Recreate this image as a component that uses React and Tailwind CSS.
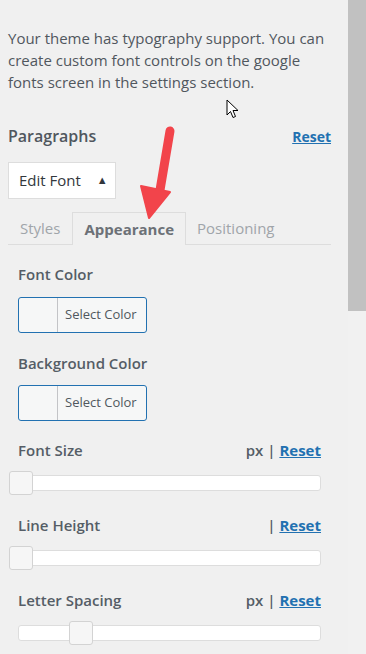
import React from "react";

const font = { fontFamily: '"Open Sans", "Noto Sans", sans-serif' };

// slider row: label, unit, reset, track with handle
function SliderControl({ label, unit, handleLeft }) {
  return (
    <div className="pl-[10px] pr-[10px]">
      <div className="flex items-center justify-between h-[22px]">
        <span className="text-[15px] font-semibold text-[#555d66]">{label}</span>
        <span className="text-[15px] font-semibold text-[#555d66]">
          {unit ? unit + " " : ""}|{" "}
          <a href="#" className="font-bold text-[#2271b1] underline">Reset</a>
        </span>
      </div>
      <div className="relative mt-[14px] h-[16px] bg-white border border-[#dddddd] rounded-[3px]">
        <div
          className="absolute top-[-5px] w-[24px] h-[24px] bg-[#f6f6f6] border border-[#d3d3d3] rounded-[3px]"
          style={{ left: handleLeft }}
        />
      </div>
    </div>
  );
}

function ColorButton() {
  return (
    <button className="flex h-[36px] w-[129px] items-stretch rounded-[3px] border border-[#2271b1] bg-[#f6f7f7] overflow-hidden">
      <span className="w-[39px] border-r border-[#c3c4c7]" />
      <span className="flex items-center pl-[7px] text-[13px] text-[#50575e]">Select Color</span>
    </button>
  );
}

export default function App() {
  return (
    <div className="relative flex h-[654px] w-[366px] overflow-hidden bg-[#f0f0f0]" style={font}>
      {/* 主內容 */}
      <div className="flex-1 pl-[8px] pr-[17px]">
        <p className="mt-[27px] text-[15px] leading-[22px] text-[#50575e]">
          Your theme has typography support. You can create custom font controls on the google fonts screen in the settings section.
        </p>

        <div className="mt-[31px] flex items-center justify-between">
          <h3 className="text-[16px] font-semibold text-[#50575e]">Paragraphs</h3>
          <a href="#" className="text-[14px] font-bold text-[#2271b1] underline">Reset</a>
        </div>

        <button className="mt-[14px] flex h-[37px] w-[108px] items-center border border-[#dddddd] bg-white pl-[10px] text-[15px] text-[#32373c]">
          Edit Font
          <span className="ml-[16px] text-[11px]">▲</span>
        </button>

        {/* 分頁 */}
        <div className="mt-[14px] flex h-[32px] items-end border-b border-[#dddddd]">
          <div className="flex h-full items-center px-[12px] text-[15px] text-[#a0a5aa]">Styles</div>
          <div className="mb-[-1px] flex h-[33px] items-center border border-b-0 border-[#dddddd] bg-[#f0f0f0] px-[11px] text-[15px] font-bold text-[#6c7177]">
            Appearance
          </div>
          <div className="flex h-full items-center px-[11px] text-[15px] text-[#a0a5aa]">Positioning</div>
        </div>

        <div className="pl-[10px]">
          <div className="mt-[18px] text-[15px] font-semibold text-[#555d66]">Font Color</div>
          <div className="mt-[11px]">
            <ColorButton />
          </div>
          <div className="mt-[19px] text-[15px] font-semibold text-[#555d66]">Background Color</div>
          <div className="mt-[11px]">
            <ColorButton />
          </div>
        </div>

        <div className="mt-[18px] flex flex-col gap-[23px]">
          <SliderControl label="Font Size" unit="px" handleLeft={-10} />
          <SliderControl label="Line Height" unit="" handleLeft={-10} />
          <SliderControl label="Letter Spacing" unit="px" handleLeft={50} />
        </div>
      </div>

      {/* 捲軸 */}
      <div className="w-[18px] bg-[#f1f1f1]">
        <div className="h-[311px] w-full bg-[#c1c1c1]" />
      </div>

      {/* 紅色箭頭 */}
      <svg className="absolute left-0 top-0 pointer-events-none" width="366" height="654">
        <line x1="170" y1="131" x2="159" y2="196" stroke="#f2444b" strokeWidth="9" strokeLinecap="round" />
        <polygon points="141,186 170,192 149,218" fill="#f2444b" strokeLinejoin="round" stroke="#f2444b" strokeWidth="2" />
      </svg>

      {/* 滑鼠游標 */}
      <svg className="absolute left-[226px] top-[99px] pointer-events-none" width="14" height="21" viewBox="0 0 14 21">
        <path d="M1 1 L1 16 L4.5 12.5 L7 18.5 L9.5 17.5 L7 11.5 L12 11.5 Z" fill="white" stroke="black" strokeWidth="1" strokeLinejoin="round" />
      </svg>
    </div>
  );
}
